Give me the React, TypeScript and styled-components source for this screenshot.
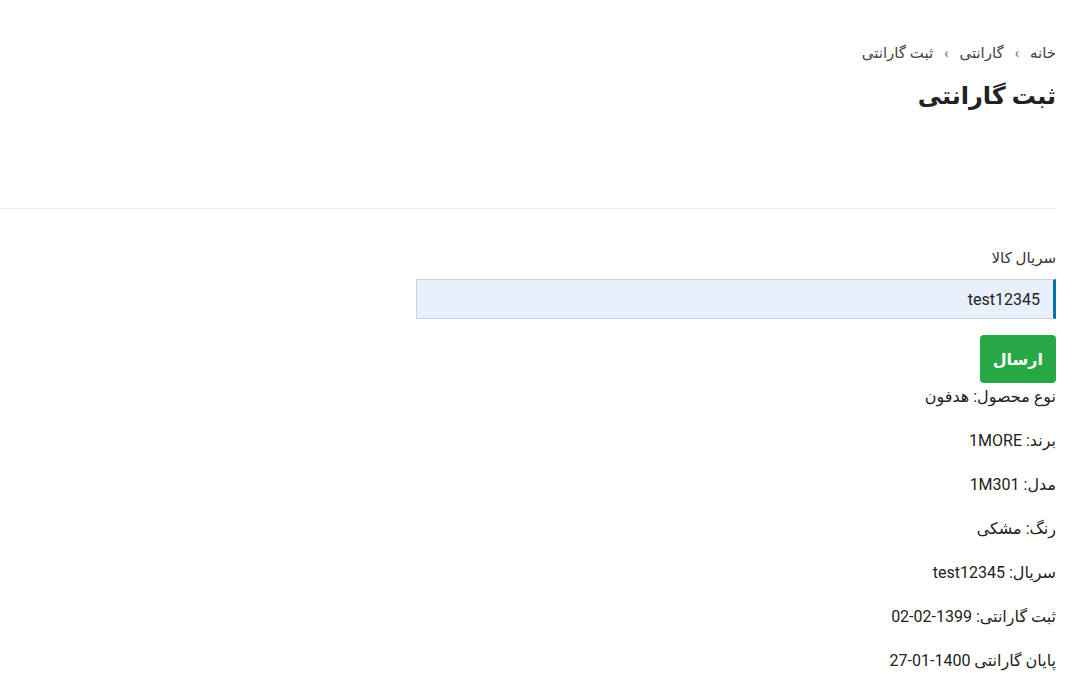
import React from "react";
import styled, { createGlobalStyle } from "styled-components";

const GlobalStyle = createGlobalStyle`
  html, body {
    margin: 0;
    padding: 0;
    background: #fff;
  }
  body {
    font-family: Roboto, "DejaVu Sans", sans-serif;
    color: #222;
    direction: rtl;
  }
`;

const Page = styled.div`
  padding-right: 31px;
  direction: rtl;
`;

const PageHeader = styled.header`
  padding-top: 42px;
  height: 166px;
  border-bottom: 1px solid #eeeeee;
`;

const Breadcrumb = styled.nav`
  display: flex;
  align-items: center;
  gap: 11px;
  font-size: 15px;
  color: #444;
  line-height: 22px;
`;

const Crumb = styled.span`
  color: #444;
`;

const Sep = styled.span`
  font-size: 14px;
  color: #666;
`;

const Title = styled.h1`
  margin: 10px 0 0;
  font-size: 24px;
  font-weight: 700;
  color: #222;
  line-height: 44px;
`;

const FormSection = styled.section`
  padding-top: 38px;
`;

const Label = styled.label`
  display: block;
  font-size: 15px;
  color: #333;
  line-height: 22px;
  margin-bottom: 10px;
`;

const Input = styled.input`
  display: block;
  width: 640px;
  height: 40px;
  box-sizing: border-box;
  background: #e8f0fe;
  border: 1px solid #cfd4da;
  border-right: 3px solid #0073aa;
  padding: 0 13px;
  font-family: Roboto, "DejaVu Sans", sans-serif;
  font-size: 16px;
  color: #222;
  outline: none;
  direction: rtl;
`;

const SubmitButton = styled.button`
  display: block;
  margin-top: 16px;
  height: 48px;
  padding: 0 13px;
  background: #28a745;
  border: none;
  border-radius: 4px;
  color: #fff;
  font-family: Roboto, "DejaVu Sans", sans-serif;
  font-size: 16px;
  font-weight: 700;
  cursor: pointer;
`;

const InfoList = styled.div`
  display: flex;
  flex-direction: column;
  gap: 22px;
  padding-top: 3px;
`;

const InfoRow = styled.p`
  margin: 0;
  font-size: 16px;
  line-height: 22px;
  color: #222;
`;

const rows = [
  "نوع محصول: هدفون",
  "برند: 1MORE",
  "مدل: 1M301",
  "رنگ: مشکی",
  "سریال: test12345",
  "ثبت گارانتی: 1399-02-02",
  "پایان گارانتی 1400-01-27",
];

export default function App() {
  return (
    <>
      <GlobalStyle />
      <Page>
        <PageHeader>
          <Breadcrumb>
            <Crumb>خانه</Crumb>
            <Sep>›</Sep>
            <Crumb>گارانتی</Crumb>
            <Sep>›</Sep>
            <Crumb>ثبت گارانتی</Crumb>
          </Breadcrumb>
          <Title>ثبت گارانتی</Title>
        </PageHeader>
        <FormSection>
          <Label htmlFor="serial">سریال کالا</Label>
          <Input id="serial" defaultValue="test12345" />
          <SubmitButton>ارسال</SubmitButton>
          <InfoList>
            {rows.map((r) => (
              <InfoRow key={r}>{r}</InfoRow>
            ))}
          </InfoList>
        </FormSection>
      </Page>
    </>
  );
}
